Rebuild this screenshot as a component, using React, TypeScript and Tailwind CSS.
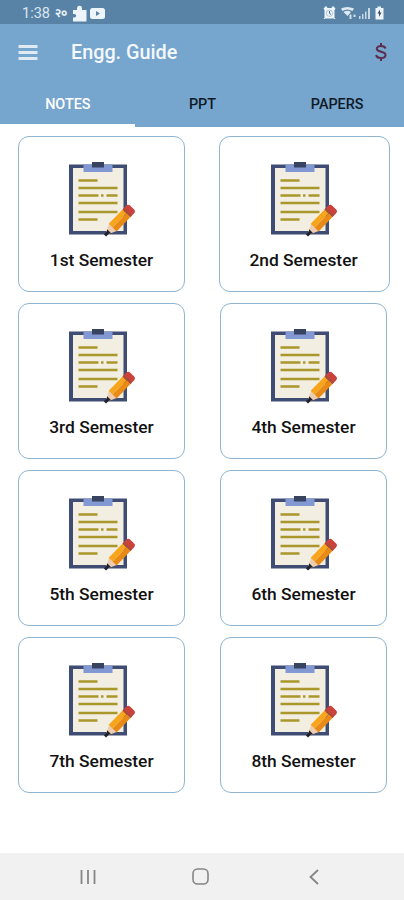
import { useState } from "react";

const tabs = ["NOTES", "PPT", "PAPERS"];

const semesters = [
  "1st Semester",
  "2nd Semester",
  "3rd Semester",
  "4th Semester",
  "5th Semester",
  "6th Semester",
  "7th Semester",
  "8th Semester",
];

function StatusBar() {
  return (
    <div className="flex h-6 items-center justify-between bg-[#5883a6] pr-5 pl-[22px] text-[#eef5fa]">
      <div className="flex items-center pt-0.5">
        <span className="w-[33px] pt-px text-[14.5px] leading-5 text-[#dbe7f0]">1:38</span>
        <span className="w-[17px] text-[12px] leading-5 font-bold">२०</span>
        <svg className="h-[17px] w-[15px]" viewBox="0 0 15 17" fill="currentColor">
          <path d="M1 5h4V3.200a2.500 2.500 0 0 1 5 0V5h4.500v11.500H1v-4h1.400a1.800 1.800 0 0 0 0-3.600H1z" />
        </svg>
        <svg className="ml-[3px] h-[11px] w-[15px]" viewBox="0 0 15 11">
          <rect width="15" height="11" rx="2.500" fill="currentColor" />
          <path d="M6 3v5l4-2.500z" fill="#5883a6" />
        </svg>
      </div>
      <svg className="mt-0.5 h-4 w-[62px]" viewBox="0 0 62 16">
        <g fill="currentColor">
          <rect x="2.500" y="3" width="10" height="10.500" rx="1.500" />
          <path d="M1.500 3.500 4 1 5.500 2.500 2.500 5zM13.500 3.500 11 1 9.500 2.500 12.500 5z" />
          <path d="M2.500 12.500 1.500 14h2zM12.500 12.500 13.500 14h-2z" />
          <path d="M19 3.500Q25 .500 32 3.500L30.500 6Q25 3 20.500 6z" opacity=".9" />
          <path d="M21.500 7Q25.500 4.500 29 7L25.500 11z" opacity=".9" />
          <path d="M27.500 9.500h2V14h-2zM31.500 9.500h2V12h-2z" opacity=".8" />
          <path d="M37 11h1.500v3H37zM40 9h1.500v5H40zM43 6.500h1.500V14H43zM46 3h2v11h-2z" opacity=".75" />
          <path d="M54 3h1.500V1.500h3.500V3h2.500v11.500H53.500V3z" />
        </g>
        <circle cx="7.500" cy="8.200" r="3.200" fill="none" stroke="#9fb9cc" strokeWidth=".8" />
        <path d="M7.500 6v2.500l1.500 1" fill="none" stroke="#486e8e" />
        <path d="M58 4.500 55.500 8.500H57v3.500l2.500-4.500H58z" fill="#3f4e5a" />
      </svg>
    </div>
  );
}

function AppBar() {
  return (
    <header className="flex h-14 items-center justify-between pr-[17px] pl-[18px] text-[#f4f8fb]">
      <div className="flex items-center">
        <svg className="h-[15px] w-5 text-[#dfeaf3]" viewBox="0 0 20 15" fill="currentColor">
          <path d="M.500 0h19v3H.500zM.500 6h19v3H.500zM.500 12h19v3H.500z" />
        </svg>
        <h1 className="ml-[33px] text-[19.8px] leading-[30px] font-medium pt-px">Engg. Guide</h1>
      </div>
      <svg
        className="h-[18px] w-3"
        viewBox="0 0 12 18"
        fill="none"
        stroke="#5b2c4b"
        strokeWidth="2"
      >
        <path d="M6 0v3M6 15v3M10.500 5.500C10 3.700 8.500 3 6 3 3.500 3 1.800 4.100 1.800 5.800 1.800 10 10.500 7.500 10.500 12 10.500 14 8.500 15 6 15 3.300 15 1.500 14 1.200 12" />
      </svg>
    </header>
  );
}

function Clipboard() {
  return (
    <svg className="ml-0.5 h-[75px] w-[67px]" viewBox="0 0 67 75">
      <path d="M0 2.500h58v70H0z" fill="#3f4c73" />
      <path d="M4 6h50.500V69H4z" fill="#f2eee1" />
      <path d="M14.500 2.500h29v7.500h-29z" fill="#8298d3" />
      <path d="M23 0h12v5.500H23z" fill="#38435f" />
      <g stroke="#aa972b" strokeWidth="2.500">
        <path d="M9.500 18.500h19M9.500 26h39M9.500 33.500h20M37.500 33.500h11M9.500 41h39M9.500 50h39M9.500 57.500h19" />
        <path d="M32 33.500h2.500" />
      </g>
      <g transform="translate(36 73.500) rotate(-46)">
        <path d="M0 0 12-5.500V5.500z" fill="#edcdb1" />
        <path d="M0-1.500H4L6-2.800V2.800L4 1.500H0z" fill="#20212a" />
        <path d="M11-5.500H31V0H11z" fill="#f6a51c" />
        <path d="M11 0H31V5.500H11z" fill="#e98a16" />
        <path d="M31-5.500h5a3 3 0 0 1 3 3v5a3 3 0 0 1-3 3h-5z" fill="#c9423c" />
        <path d="M31-5.500h2v11h-2z" fill="#a94d3b" />
      </g>
    </svg>
  );
}

function SemesterCard({ title, wide }: { title: string; wide: boolean }) {
  return (
    <button
      className={`flex h-[156px] flex-col items-center rounded-[11px] border border-[#8fb5d3] bg-white pt-[25px] ${
        wide ? "-ml-px w-[171px] pr-0.5" : "w-[167px]"
      }`}
    >
      <Clipboard />
      <span className="mt-[11px] text-[17.4px] leading-6 font-medium whitespace-nowrap text-[#111111]">
        {title}
      </span>
    </button>
  );
}

function NavBar() {
  return (
    <nav className="flex h-[47px] items-center justify-between bg-[#f1f1f1] pr-[84px] pl-20 text-[#858585]">
      <svg className="h-4 w-4" viewBox="0 0 16 16" stroke="currentColor" strokeWidth="1.800">
        <path d="M1.500 1v14M8 1v14M14.500 1v14" />
      </svg>
      <svg className="mr-1 h-[17px] w-[17px]" viewBox="0 0 17 17" fill="none" stroke="currentColor" strokeWidth="1.600">
        <rect x="1" y="1" width="15" height="15" rx="4.500" />
      </svg>
      <svg className="h-4 w-[11px]" viewBox="0 0 11 16" fill="none" stroke="currentColor" strokeWidth="1.800">
        <path d="M9 1 1.500 8 9 15" />
      </svg>
    </nav>
  );
}

export default function App() {
  const [activeTab, setActiveTab] = useState("NOTES");

  return (
    <div className="flex h-[900px] w-[404px] flex-col overflow-hidden bg-white font-[Roboto,sans-serif]">
      <StatusBar />
      <div className="bg-[#76a5cd]">
        <AppBar />
        <div className="grid h-[47px] grid-cols-3">
          {tabs.map((tab) => (
            <button
              key={tab}
              onClick={() => setActiveTab(tab)}
              className={`border-b-[3px] pt-[5px] pl-px text-[14.4px] font-medium ${
                activeTab === tab ? "border-white text-white" : "border-transparent text-[#0f1a26]"
              }`}
            >
              {tab}
            </button>
          ))}
        </div>
      </div>
      <main className="grid flex-1 grid-cols-[202px_auto] content-start gap-y-[11px] pt-[9px] pl-[18px]">
        {semesters.map((title, index) => (
          <SemesterCard key={title} title={title} wide={index === 1} />
        ))}
      </main>
      <NavBar />
    </div>
  );
}
